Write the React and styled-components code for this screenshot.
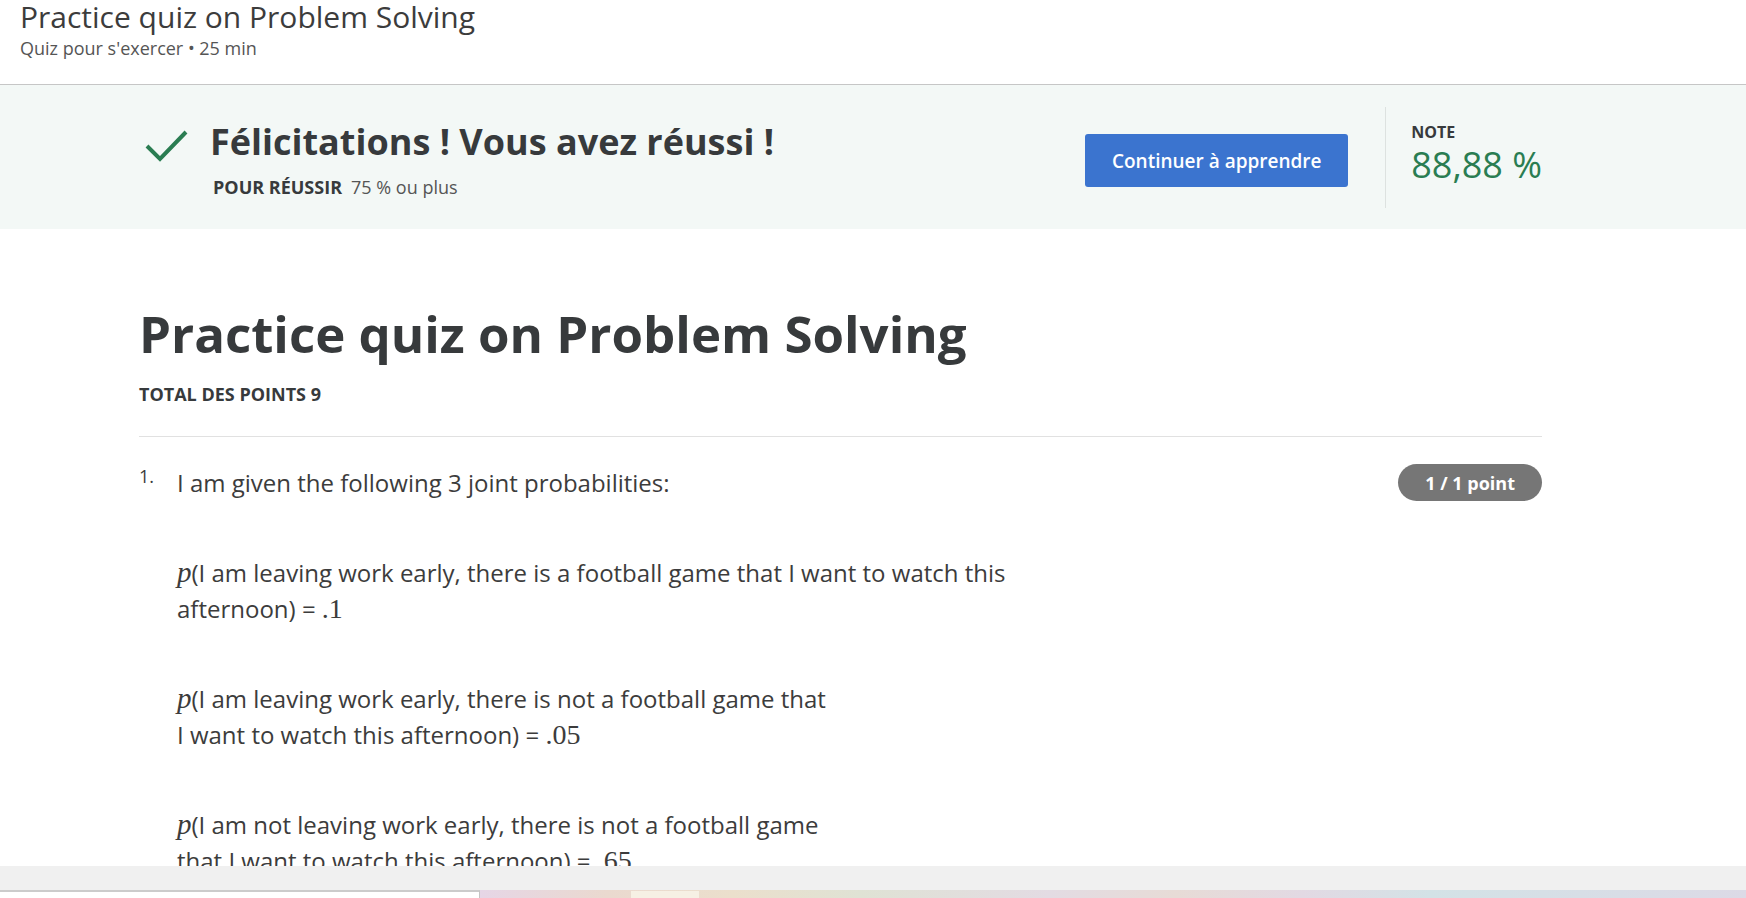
import React from 'react'
import styled, {createGlobalStyle} from 'styled-components'

const GlobalStyle = createGlobalStyle`
  html, body {
    margin: 0;
    padding: 0;
    background: #fff;
    overflow: hidden;
  }
  body {
    font-family: "Open Sans", "Liberation Sans", sans-serif;
    color: #373a3c;
  }
  * {
    box-sizing: border-box;
  }
`

const Page = styled.div`
  height: 100vh;
  display: flex;
  flex-direction: column;
  overflow: hidden;
`

const TopBar = styled.header`
  flex: 0 0 85px;
  padding: 0 0 0 20px;
  border-bottom: 1px solid #c6c6c6;
`
const TopTitle = styled.h1`
  margin: 0;
  font-size: 30px;
  line-height: 34px;
  font-weight: 400;
  color: #3c3c3c;
`
const TopMeta = styled.div`
  margin-top: 2px;
  font-size: 18px;
  line-height: 24px;
  color: #555;
`

const Scroller = styled.main`
  flex: 1;
  overflow: hidden;
`

const Banner = styled.section`
  height: 144px;
  background: #f3f8f6;
`
const BannerInner = styled.div`
  margin-left: 139px;
  width: 1403px;
  height: 100%;
  display: flex;
  align-items: flex-start;
`
const Result = styled.div`
  flex: 1;
  display: flex;
  align-items: flex-start;
  margin-top: 35px;
  padding-left: 6px;
`
const Check = styled.svg`
  width: 44px;
  height: 34px;
  margin-top: 9px;
  flex: none;
`
const ResultText = styled.div`
  margin-left: 21px;
`
const Congrats = styled.h2`
  margin: 0;
  font-size: 36px;
  line-height: 44px;
  font-weight: 700;
  color: #373a3c;
`
const PassLine = styled.div`
  margin-top: 11px;
  font-size: 18px;
  line-height: 24px;
  color: #555;
  padding-left: 3px;
  b {
    color: #373a3c;
    font-weight: 700;
    margin-right: 9px;
  }
`
const PrimaryButton = styled.button`
  margin-top: 49px;
  width: 263px;
  height: 53px;
  border: none;
  border-radius: 3px;
  background: #3b74cf;
  color: #fff;
  font-family: inherit;
  font-size: 19px;
  font-weight: 600;
  cursor: pointer;
`
const VDivider = styled.div`
  margin: 22px 0 0 37px;
  width: 1px;
  height: 101px;
  background: #dde2e0;
`
const Grade = styled.div`
  margin: 36px 0 0 25px;
`
const GradeLabel = styled.div`
  font-size: 16px;
  line-height: 22px;
  font-weight: 700;
  color: #373a3c;
  margin-bottom: 2px;
`
const GradeValue = styled.div`
  font-size: 36px;
  line-height: 40px;
  color: #2a7d52;
`

const Content = styled.div`
  margin-left: 139px;
  width: 1403px;
  padding-top: 74px;
`
const QuizTitle = styled.h1`
  margin: 0;
  font-size: 51px;
  line-height: 60px;
  font-weight: 700;
  color: #373a3c;
`
const TotalPoints = styled.div`
  margin-top: 19px;
  font-size: 18px;
  line-height: 24px;
  font-weight: 700;
  color: #373a3c;
  padding-bottom: 30px;
  border-bottom: 1px solid #e1e1e1;
`
const QuestionRow = styled.div`
  margin-top: 27px;
  display: flex;
  align-items: center;
`
const QNumber = styled.span`
  width: 38px;
  font-size: 18px;
  line-height: 36px;
  align-self: flex-start;
  margin-top: -6px;
  color: #3c3c3c;
`
const QText = styled.div`
  flex: 1;
  font-size: 24px;
  line-height: 36px;
  color: #3c3c3c;
`
const PointBadge = styled.span`
  height: 37px;
  padding: 0 27px;
  border-radius: 19px;
  background: #767676;
  color: #fff;
  font-size: 18px;
  font-weight: 700;
  display: inline-flex;
  align-items: center;
`
const Prob = styled.p`
  margin: 53px 0 0 38px;
  font-size: 24px;
  line-height: 36px;
  color: #3c3c3c;
`
const MathVar = styled.i`
  font-family: "Liberation Serif", "DejaVu Serif", serif;
  font-size: 29px;
`
const MathNum = styled.span`
  font-family: "Liberation Serif", "DejaVu Serif", serif;
  font-size: 28px;
`

const StatusBar = styled.div`
  flex: 0 0 24px;
  background: #f0f0f0;
`
const TaskStrip = styled.div`
  flex: 0 0 8px;
  display: flex;
`
const TaskCell = styled.div`
  width: 480px;
  border-top: 2px solid #cbcbcb;
  border-right: 1px solid #c4c4c4;
  background: #fff;
`
const TaskGradient = styled.div`
  flex: 1;
  position: relative;
  background: linear-gradient(90deg, #e6d6e6 0%, #ead9cf 10%, #ebdfcc 20%, #dfe2d4 30%, #e3dbe3 45%, #e7dbd6 55%, #e2d9e3 65%, #d3e2e6 75%, #d8dde6 90%, #dcdae6 100%);
`
const TaskHighlight = styled.span`
  position: absolute;
  left: 151px;
  top: 1px;
  bottom: 0;
  width: 68px;
  background: #f6f0e4;
`

const probs = [
  ['(I am leaving work early, there is a football game that I want to watch this', 'afternoon) = ', '.1'],
  ['(I am leaving work early, there is not a football game that', 'I want to watch this afternoon) = ', '.05'],
  ['(I am not leaving work early, there is not a football game', 'that I want to watch this afternoon) = ', '.65'],
]

export default function App() {
  return (
    <Page>
      <GlobalStyle/>
      <TopBar>
        <TopTitle>Practice quiz on Problem Solving</TopTitle>
        <TopMeta>Quiz pour s'exercer • 25 min</TopMeta>
      </TopBar>
      <Scroller>
        <Banner>
          <BannerInner>
            <Result>
              <Check viewBox="0 0 44 34">
                <path d="M2 17 L15 30 L41 3" fill="none" stroke="#2a7d52" strokeWidth="4"/>
              </Check>
              <ResultText>
                <Congrats>Félicitations ! Vous avez réussi !</Congrats>
                <PassLine><b>POUR RÉUSSIR</b>75 % ou plus</PassLine>
              </ResultText>
            </Result>
            <PrimaryButton>Continuer à apprendre</PrimaryButton>
            <VDivider/>
            <Grade>
              <GradeLabel>NOTE</GradeLabel>
              <GradeValue>88,88 %</GradeValue>
            </Grade>
          </BannerInner>
        </Banner>
        <Content>
          <QuizTitle>Practice quiz on Problem Solving</QuizTitle>
          <TotalPoints>TOTAL DES POINTS 9</TotalPoints>
          <QuestionRow>
            <QNumber>1.</QNumber>
            <QText>I am given the following 3 joint probabilities:</QText>
            <PointBadge>1 / 1 point</PointBadge>
          </QuestionRow>
          {probs.map((p, i) => (
            <Prob key={i}>
              <MathVar>p</MathVar>{p[0]}<br/>{p[1]}<MathNum>{p[2]}</MathNum>
            </Prob>
          ))}
        </Content>
      </Scroller>
      <StatusBar/>
      <TaskStrip>
        <TaskCell/>
        <TaskGradient><TaskHighlight/></TaskGradient>
      </TaskStrip>
    </Page>
  )
}
